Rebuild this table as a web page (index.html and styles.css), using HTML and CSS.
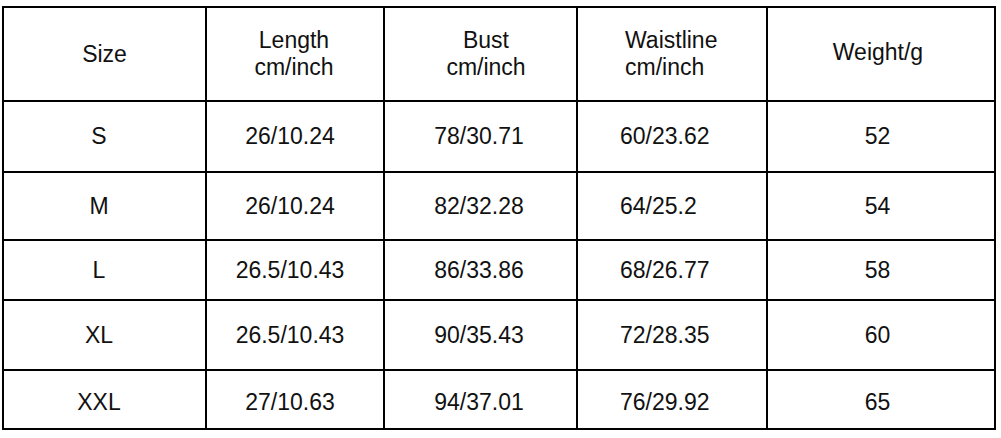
FILE: index.html
```html
<!DOCTYPE html>
<html lang="en">
<head>
<meta charset="utf-8">
<title>Size chart</title>
<link rel="stylesheet" href="styles.css">
</head>
<body>
<div class="chart" role="table">
  <div class="cell head c1">Size</div>
  <div class="cell head c2">Length<br>cm/inch</div>
  <div class="cell head c3">Bust<br>cm/inch</div>
  <div class="cell head c4">Waistline<br>cm/inch</div>
  <div class="cell head c5">Weight/g</div>

  <div class="cell c1">S</div>
  <div class="cell c2">26/10.24</div>
  <div class="cell c3">78/30.71</div>
  <div class="cell c4">60/23.62</div>
  <div class="cell c5">52</div>

  <div class="cell c1">M</div>
  <div class="cell c2">26/10.24</div>
  <div class="cell c3">82/32.28</div>
  <div class="cell c4">64/25.2</div>
  <div class="cell c5">54</div>

  <div class="cell c1">L</div>
  <div class="cell c2">26.5/10.43</div>
  <div class="cell c3">86/33.86</div>
  <div class="cell c4">68/26.77</div>
  <div class="cell c5">58</div>

  <div class="cell c1">XL</div>
  <div class="cell c2">26.5/10.43</div>
  <div class="cell c3">90/35.43</div>
  <div class="cell c4">72/28.35</div>
  <div class="cell c5">60</div>

  <div class="cell last c1">XXL</div>
  <div class="cell last c2">27/10.63</div>
  <div class="cell last c3">94/37.01</div>
  <div class="cell last c4">76/29.92</div>
  <div class="cell last c5">65</div>
</div>
</body>
</html>
```
FILE: styles.css
```css
html, body {
  margin: 0;
  padding: 0;
  background: #fff;
}

body {
  font-family: "Liberation Sans", Arial, sans-serif;
  color: #111;
}

.chart {
  display: grid;
  width: max-content;
  margin: 6px 0 0 2px;
  padding: 2px;
  gap: 2px;
  background: #000;
  grid-template-columns: 201px 176px 191px 188px 226px;
  grid-template-rows: 92px 69px 66px 58px 68px 57px;
}

.cell {
  background: #fff;
  display: flex;
  align-items: center;
  justify-content: center;
  text-align: center;
  font-size: 23px;
  line-height: normal;
  box-sizing: border-box;
}

.head {
  line-height: 27px;
}

/* column offsets (data rows) */
.c1 { padding-right: 11px; }
.c2 { padding-right: 10px; }
.c3 { padding-right: 3px; }
.c4 {
  justify-content: flex-start;
  text-align: left;
  padding-left: 42px;
}
.c5 { padding-right: 7px; }

/* header offsets */
.head.c1 { padding-right: 0; }
.head.c2 { padding-right: 2px; }
.head.c3 { padding-right: 0; padding-left: 11px; }
.head.c4 { padding-left: 47px; }
.head.c5 { padding-right: 6px; padding-bottom: 3px; }

.last {
  padding-top: 6px;
}
```
